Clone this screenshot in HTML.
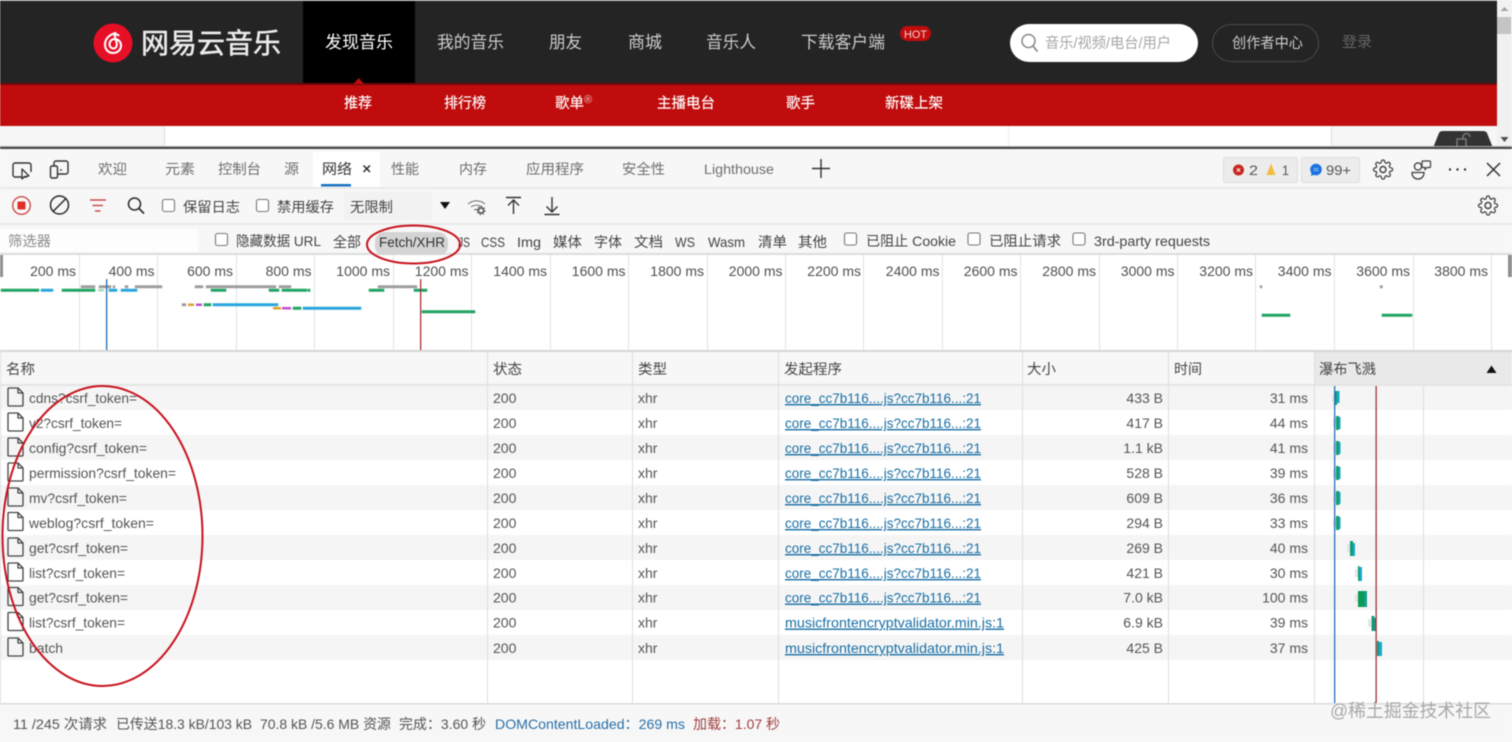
<!DOCTYPE html>
<html lang="zh"><head><meta charset="utf-8"><title>网易云音乐 DevTools</title>
<style>
html,body{margin:0;padding:0;background:#fff;width:1512px;height:742px;overflow:hidden}
svg{display:block;filter:blur(.4px)}
text{font-family:"Liberation Sans","Noto Sans CJK SC",sans-serif;font-size:14px;fill:#4a4a4a;white-space:pre}
.n{font-size:17px;fill:#ccc}
.s{font-size:14.5px;fill:#fff;stroke:#fff;stroke-width:.15}
.tb{fill:#6e6e6e}
.m{fill:#555}
.lk{fill:#1a6fa5;text-decoration:underline}
.r{text-anchor:end}
.ov{fill:#4f4f4f}
.h{fill:#444}
</style></head><body>
<svg width="1512" height="742" viewBox="0 0 1512 742" xmlns="http://www.w3.org/2000/svg">
<defs>
<g id="f"><path d="M9 388h9l5 5v12a1 1 0 0 1-1 1H9a1 1 0 0 1-1-1V389a1 1 0 0 1 1-1zM18 388v5h5" fill="none" stroke="#444" stroke-width="1.3" stroke-linejoin="round"/></g>
<g id="gear" fill="none" stroke="#3c3c3c" stroke-width="1.4"><path transform="translate(-10.4 -10.4) scale(.87)" d="M19.4 15a1.65 1.65 0 0 0 .33 1.82l.06.06a2 2 0 0 1 0 2.83 2 2 0 0 1-2.83 0l-.06-.06a1.65 1.65 0 0 0-1.82-.33 1.65 1.65 0 0 0-1 1.51V21a2 2 0 0 1-2 2 2 2 0 0 1-2-2v-.09A1.65 1.65 0 0 0 9 19.4a1.65 1.65 0 0 0-1.82.33l-.06.06a2 2 0 0 1-2.83 0 2 2 0 0 1 0-2.83l.06-.06a1.65 1.65 0 0 0 .33-1.82 1.65 1.65 0 0 0-1.51-1H3a2 2 0 0 1-2-2 2 2 0 0 1 2-2h.09A1.65 1.65 0 0 0 4.6 9a1.65 1.65 0 0 0-.33-1.82l-.06-.06a2 2 0 0 1 0-2.83 2 2 0 0 1 2.83 0l.06.06a1.65 1.65 0 0 0 1.82.33H9a1.65 1.65 0 0 0 1-1.51V3a2 2 0 0 1 2-2 2 2 0 0 1 2 2v.09a1.65 1.65 0 0 0 1 1.51 1.65 1.65 0 0 0 1.82-.33l.06-.06a2 2 0 0 1 2.83 0 2 2 0 0 1 0 2.83l-.06.06a1.65 1.65 0 0 0-.33 1.82V9a1.65 1.65 0 0 0 1.51 1H21a2 2 0 0 1 2 2 2 2 0 0 1-2 2h-.09a1.65 1.65 0 0 0-1.51 1z"/><circle r="3"/></g>
</defs>

<!-- page top -->
<rect width="1512" height="150" fill="#fff"/>
<rect width="1497" height="1.500" fill="#aaa"/>
<rect y="1" width="1497" height="83" fill="#242424"/>
<rect x="303" y="1" width="112" height="83" fill="#000"/>
<rect y="83" width="1497" height="2" fill="#6d0808"/>
<rect y="85" width="1497" height="41" fill="#c00c0c"/>
<path d="M353.500 84L358.700 78L364 84z" fill="#c20c0c"/>
<rect y="126" width="164" height="22" fill="#f6f6f6"/>
<rect x="164" y="126" width="1" height="22" fill="#ddd"/>
<rect x="1008" y="126" width="1" height="22" fill="#eee"/>
<rect x="1331" y="126" width="166" height="22" fill="#f6f6f6"/>
<rect x="1331" y="126" width="1" height="22" fill="#ddd"/>
<rect x="1497" y="0" width="15" height="148" fill="#f1f1f1"/>
<rect x="1497" y="17" width="14" height="17" fill="#c4c4c4"/>
<path d="M1500.500 11L1504.500 7L1508.500 11z" fill="#a3a3a3"/>
<path d="M1500.500 137L1504.500 142L1508.500 137z" fill="#505050"/>
<path d="M1433 148L1439 133Q1440 131 1443 131H1483Q1486 131 1487 133L1493 148z" fill="#333"/>
<path d="M1457 139h9v8h-9zM1463 139v-2a3.500 3.500 0 0 1 7 0" fill="none" stroke="#777" stroke-width="1.500"/>

<!-- logo -->
<circle cx="113" cy="43" r="19.500" fill="#e60f26"/>
<path d="M115.500 33C109 35 105 39 105 44.500C105 49.500 108.500 53 113 53C118 53 121 49.500 121 45.500C121 41.500 118 39 114.500 39C111.500 39 109.500 41.500 109.500 44.300C109.500 46.800 111.300 48.500 113.300 48.500C115.500 48.500 116.800 46.800 116.800 44.500C116.800 41.500 115.200 38.500 114.700 36C114.500 34.500 116.500 34 118.500 35.300" fill="none" stroke="#fff" stroke-width="2.100" stroke-linecap="round"/>
<text x="141" y="53" textLength="140" lengthAdjust="spacingAndGlyphs" style="font-size:28px;fill:#ececec;stroke:#ececec;stroke-width:.5">网易云音乐</text>

<!-- nav -->
<text class="n" x="325" y="48" textLength="68" lengthAdjust="spacingAndGlyphs" style="fill:#fff">发现音乐</text>
<text class="n" x="437" y="48" textLength="67" lengthAdjust="spacingAndGlyphs">我的音乐</text>
<text class="n" x="549" y="48" textLength="33" lengthAdjust="spacingAndGlyphs">朋友</text>
<text class="n" x="628" y="48" textLength="34" lengthAdjust="spacingAndGlyphs">商城</text>
<text class="n" x="706" y="48" textLength="50" lengthAdjust="spacingAndGlyphs">音乐人</text>
<text class="n" x="801" y="48" textLength="84" lengthAdjust="spacingAndGlyphs">下载客户端</text>
<rect x="900" y="26" width="31" height="15" rx="7.500" fill="#c20c0c"/>
<text x="904" y="38" textLength="23" lengthAdjust="spacingAndGlyphs" style="font-size:11px;fill:#f4d0d0">HOT</text>
<rect x="1010" y="24" width="188" height="38" rx="19" fill="#fff"/>
<circle cx="1028.500" cy="41" r="6.500" fill="none" stroke="#888" stroke-width="1.500"/>
<path d="M1033 46L1037 51" stroke="#888" stroke-width="1.800" stroke-linecap="round"/>
<text x="1045" y="48" textLength="126" lengthAdjust="spacingAndGlyphs" style="font-size:14.500px;fill:#a6a6a6">音乐/视频/电台/用户</text>
<rect x="1212.500" y="24.500" width="106" height="37" rx="18.500" fill="none" stroke="#4a4a4a"/>
<text x="1232" y="48" textLength="71" lengthAdjust="spacingAndGlyphs" style="font-size:14.500px;fill:#ccc">创作者中心</text>
<text x="1342" y="47" textLength="30" lengthAdjust="spacingAndGlyphs" style="font-size:14.500px;fill:#666">登录</text>

<!-- subnav -->
<text class="s" x="344" y="108" textLength="28" lengthAdjust="spacingAndGlyphs">推荐</text>
<text class="s" x="444" y="108" textLength="42" lengthAdjust="spacingAndGlyphs">排行榜</text>
<text class="s" x="555" y="108" textLength="29" lengthAdjust="spacingAndGlyphs">歌单</text>
<text x="584" y="103" style="font-size:11px;fill:#f3c5c5">®</text>
<text class="s" x="657" y="108" textLength="58" lengthAdjust="spacingAndGlyphs">主播电台</text>
<text class="s" x="786" y="108" textLength="29" lengthAdjust="spacingAndGlyphs">歌手</text>
<text class="s" x="885" y="108" textLength="58" lengthAdjust="spacingAndGlyphs">新碟上架</text>

<!-- devtools chrome -->
<rect y="146" width="1512" height="1" fill="#aaa"/>
<rect y="147" width="1512" height="2" fill="#444"/>
<rect y="149" width="1512" height="593" fill="#f7f7f7"/>
<rect y="187" width="1512" height="2" fill="#e9e9e9"/>
<rect y="223" width="1512" height="2" fill="#e9e9e9"/>
<rect y="253" width="1512" height="2" fill="#dcdcdc"/>

<!-- tab bar icons -->
<path d="M27 177H15a2 2 0 0 1-2-2V165a2 2 0 0 1 2-2H29a2 2 0 0 1 2 2V172" fill="none" stroke="#333" stroke-width="1.400"/>
<path d="M22 169L22 179L24.500 176.500L29 176z" fill="#fff" stroke="#333" stroke-width="1.300" stroke-linejoin="round"/>
<path d="M57 174H66a2 2 0 0 0 2-2V163a2 2 0 0 0-2-2H56a2 2 0 0 0-2 2V166" fill="none" stroke="#333" stroke-width="1.400"/>
<rect x="50.500" y="166" width="7" height="12" rx="1.500" fill="#f7f7f7" stroke="#333" stroke-width="1.400"/>
<path d="M60 170h2" stroke="#333" stroke-width="1.300"/>
<rect x="313" y="152" width="67" height="35" fill="#fff"/>
<rect x="321" y="184" width="30" height="2.500" fill="#1a73c4"/>
<text class="tb" x="98" y="174" textLength="29" lengthAdjust="spacingAndGlyphs">欢迎</text>
<text class="tb" x="165" y="174" textLength="30" lengthAdjust="spacingAndGlyphs">元素</text>
<text class="tb" x="218" y="174" textLength="43" lengthAdjust="spacingAndGlyphs">控制台</text>
<text class="tb" x="284" y="174" textLength="15" lengthAdjust="spacingAndGlyphs">源</text>
<text x="322" y="174" textLength="30" lengthAdjust="spacingAndGlyphs" style="fill:#333">网络</text>
<path d="M363.500 165.500L370 172M370 165.500L363.500 172" stroke="#222" stroke-width="1.400"/>
<text class="tb" x="391" y="174" textLength="28" lengthAdjust="spacingAndGlyphs">性能</text>
<text class="tb" x="459" y="174" textLength="28" lengthAdjust="spacingAndGlyphs">内存</text>
<text class="tb" x="526" y="174" textLength="58" lengthAdjust="spacingAndGlyphs">应用程序</text>
<text class="tb" x="622" y="174" textLength="43" lengthAdjust="spacingAndGlyphs">安全性</text>
<text class="tb" x="704" y="174" textLength="70" lengthAdjust="spacingAndGlyphs">Lighthouse</text>
<path d="M821 159V178M812 168.500H830" stroke="#333" stroke-width="1.400"/>

<!-- badges -->
<rect x="1223.500" y="157.500" width="74" height="25" rx="2" fill="#ececec" stroke="#dedede"/>
<rect x="1301.500" y="157.500" width="58" height="25" rx="2" fill="#ececec" stroke="#dedede"/>
<circle cx="1238.500" cy="170" r="5.500" fill="#c8261e"/>
<path d="M1236.800 168.300l3.400 3.400M1240.200 168.300l-3.400 3.400" stroke="#fff" stroke-width="1"/>
<text x="1249" y="175" textLength="9" lengthAdjust="spacingAndGlyphs" class="m">2</text>
<path d="M1271 163.500L1275.500 175H1266.500z" fill="#f3bb3f"/>
<text x="1282" y="175" textLength="7" lengthAdjust="spacingAndGlyphs" class="m">1</text>
<circle cx="1316" cy="169.500" r="5.800" fill="#1b73e0"/>
<path d="M1311.500 173L1311 176L1314.500 174.500z" fill="#1b73e0"/>
<path d="M1313.500 168.500h5M1313.500 170.500h5" stroke="#bcd7fa" stroke-width=".8"/>
<text x="1326" y="175" textLength="25" lengthAdjust="spacingAndGlyphs" class="m">99+</text>
<use href="#gear" x="1383" y="169.500"/>
<circle cx="1418" cy="166.500" r="3.600" fill="none" stroke="#3c3c3c" stroke-width="1.300"/>
<path d="M1412 172.500h12c0 4-2.500 6.500-6 6.500s-6-2.500-6-6.500z" fill="none" stroke="#3c3c3c" stroke-width="1.300" stroke-linejoin="round"/>
<path d="M1423 161h6.500a1 1 0 0 1 1 1v4.500a1 1 0 0 1-1 1h-2.500l-2 2v-2h-2a1 1 0 0 1-1-1v-4.500a1 1 0 0 1 1-1z" fill="none" stroke="#3c3c3c" stroke-width="1.200"/>
<circle cx="1450" cy="169.500" r="1.200" fill="#333"/><circle cx="1457.500" cy="169.500" r="1.200" fill="#333"/><circle cx="1465" cy="169.500" r="1.200" fill="#333"/>
<path d="M1487 163L1500 176M1500 163L1487 176" stroke="#333" stroke-width="1.500"/>

<!-- toolbar -->
<circle cx="21.500" cy="205.500" r="8.800" fill="none" stroke="#c9504d" stroke-width="1.400"/>
<rect x="17.500" y="201.500" width="8" height="8" rx="1" fill="#e0302a"/>
<circle cx="59.500" cy="205" r="9" fill="none" stroke="#2a2a2a" stroke-width="1.500"/>
<path d="M53 211.500L66 198.500" stroke="#2a2a2a" stroke-width="1.500"/>
<path d="M90 200H106M92.500 205.500H103M95 211H100.500" stroke="#c9504d" stroke-width="1.500"/>
<circle cx="134.500" cy="204" r="6" fill="none" stroke="#2a2a2a" stroke-width="1.500"/>
<path d="M139 208.500L144 213.500" stroke="#2a2a2a" stroke-width="1.700"/>
<rect x="162.500" y="199.500" width="12" height="12" rx="2" fill="#fff" stroke="#777" stroke-width="1.100"/>
<text class="h" x="183" y="212" textLength="57" lengthAdjust="spacingAndGlyphs">保留日志</text>
<rect x="256.500" y="199.500" width="12" height="12" rx="2" fill="#fff" stroke="#777" stroke-width="1.100"/>
<text class="h" x="277" y="212" textLength="57" lengthAdjust="spacingAndGlyphs">禁用缓存</text>
<rect x="344" y="192" width="88" height="28" fill="#f2f2f2"/>
<text class="h" x="350" y="212" textLength="43" lengthAdjust="spacingAndGlyphs">无限制</text>
<path d="M440 202H450L445 209z" fill="#111"/>
<path d="M468 204a13 13 0 0 1 17 0M471 207a9 9 0 0 1 11 0M474 210a5 5 0 0 1 5 0" fill="none" stroke="#777" stroke-width="1.100"/>
<circle cx="481" cy="210.500" r="2.600" fill="#f7f7f7" stroke="#555" stroke-width="1.600"/>
<circle cx="481" cy="210.500" r="4" fill="none" stroke="#555" stroke-width="1.200" stroke-dasharray="1.500 1.600"/>
<path d="M506 197.500H521M513.500 214V200M508 205.500L513.500 200L519 205.500" fill="none" stroke="#333" stroke-width="1.400"/>
<path d="M552 197V212M546.500 206.500L552 212L557.500 206.500M544.500 214.500H559.500" fill="none" stroke="#333" stroke-width="1.400"/>
<use href="#gear" x="1488" y="205.500"/>

<!-- filter row -->
<rect x="0" y="229" width="198" height="23" fill="#fdfdfd"/>
<text x="8" y="246" textLength="43" lengthAdjust="spacingAndGlyphs" style="fill:#8a8a8a">筛选器</text>
<rect x="215.500" y="233.500" width="12" height="12" rx="2" fill="#fff" stroke="#777" stroke-width="1.100"/>
<text class="h" x="236" y="246" textLength="85" lengthAdjust="spacingAndGlyphs">隐藏数据 URL</text>
<text class="h" x="333" y="247" textLength="28" lengthAdjust="spacingAndGlyphs">全部</text>
<rect x="375" y="232" width="73" height="24" rx="10" fill="#d4d4d4"/>
<text x="379" y="247" textLength="66" lengthAdjust="spacingAndGlyphs" style="fill:#333">Fetch/XHR</text>
<text class="h" x="458" y="247" textLength="12" lengthAdjust="spacingAndGlyphs">JS</text>
<text class="h" x="481" y="247" textLength="24" lengthAdjust="spacingAndGlyphs">CSS</text>
<text class="h" x="517" y="247" textLength="24" lengthAdjust="spacingAndGlyphs">Img</text>
<text class="h" x="553" y="247" textLength="29" lengthAdjust="spacingAndGlyphs">媒体</text>
<text class="h" x="594" y="247" textLength="28" lengthAdjust="spacingAndGlyphs">字体</text>
<text class="h" x="634" y="247" textLength="29" lengthAdjust="spacingAndGlyphs">文档</text>
<text class="h" x="675" y="247" textLength="20" lengthAdjust="spacingAndGlyphs">WS</text>
<text class="h" x="708" y="247" textLength="37" lengthAdjust="spacingAndGlyphs">Wasm</text>
<text class="h" x="758" y="247" textLength="29" lengthAdjust="spacingAndGlyphs">清单</text>
<text class="h" x="798" y="247" textLength="29" lengthAdjust="spacingAndGlyphs">其他</text>
<rect x="844.500" y="233" width="12" height="12" rx="2" fill="#fff" stroke="#777" stroke-width="1.100"/>
<text class="h" x="866" y="246" textLength="90" lengthAdjust="spacingAndGlyphs">已阻止 Cookie</text>
<rect x="968" y="233" width="12" height="12" rx="2" fill="#fff" stroke="#777" stroke-width="1.100"/>
<text class="h" x="989" y="246" textLength="72" lengthAdjust="spacingAndGlyphs">已阻止请求</text>
<rect x="1073" y="233" width="12" height="12" rx="2" fill="#fff" stroke="#777" stroke-width="1.100"/>
<text class="h" x="1094" y="246" textLength="116" lengthAdjust="spacingAndGlyphs">3rd-party requests</text>

<!-- overview -->
<rect y="255" width="1512" height="96" fill="#fff"/>
<g fill="#e2e2e2">
<rect x="79" y="255" width="1" height="96"/><rect x="157" y="255" width="1" height="96"/><rect x="236" y="255" width="1" height="96"/><rect x="314" y="255" width="1" height="96"/><rect x="393" y="255" width="1" height="96"/><rect x="471" y="255" width="1" height="96"/><rect x="550" y="255" width="1" height="96"/><rect x="628" y="255" width="1" height="96"/><rect x="707" y="255" width="1" height="96"/><rect x="785" y="255" width="1" height="96"/><rect x="863" y="255" width="1" height="96"/><rect x="942" y="255" width="1" height="96"/><rect x="1020" y="255" width="1" height="96"/><rect x="1099" y="255" width="1" height="96"/><rect x="1177" y="255" width="1" height="96"/><rect x="1255" y="255" width="1" height="96"/><rect x="1334" y="255" width="1" height="96"/><rect x="1413" y="255" width="1" height="96"/><rect x="1491" y="255" width="1" height="96"/>
</g>
<rect x="0" y="255" width="3" height="22" fill="#8f8f8f"/>
<rect x="1508" y="255" width="4" height="22" fill="#8f8f8f"/>
<g>
<text class="ov" x="76" y="276" text-anchor="end">200 ms</text>
<text class="ov" x="154.500" y="276" text-anchor="end">400 ms</text>
<text class="ov" x="233" y="276" text-anchor="end">600 ms</text>
<text class="ov" x="311.500" y="276" text-anchor="end">800 ms</text>
<text class="ov" x="390" y="276" text-anchor="end">1000 ms</text>
<text class="ov" x="468.500" y="276" text-anchor="end">1200 ms</text>
<text class="ov" x="547" y="276" text-anchor="end">1400 ms</text>
<text class="ov" x="625.500" y="276" text-anchor="end">1600 ms</text>
<text class="ov" x="704" y="276" text-anchor="end">1800 ms</text>
<text class="ov" x="782.500" y="276" text-anchor="end">2000 ms</text>
<text class="ov" x="861" y="276" text-anchor="end">2200 ms</text>
<text class="ov" x="939.500" y="276" text-anchor="end">2400 ms</text>
<text class="ov" x="1017.500" y="276" text-anchor="end">2600 ms</text>
<text class="ov" x="1096" y="276" text-anchor="end">2800 ms</text>
<text class="ov" x="1174.500" y="276" text-anchor="end">3000 ms</text>
<text class="ov" x="1253" y="276" text-anchor="end">3200 ms</text>
<text class="ov" x="1331.500" y="276" text-anchor="end">3400 ms</text>
<text class="ov" x="1410" y="276" text-anchor="end">3600 ms</text>
<text class="ov" x="1488" y="276" text-anchor="end">3800 ms</text>
</g>
<g fill="#1fa463" stroke="#1fa463" stroke-width=".5">
<rect x="1" y="289" width="38" height="2.500"/><rect x="62" y="289" width="33" height="2.500"/><rect x="211" y="289" width="15" height="2.500"/><rect x="269" y="289" width="10" height="2.500"/><rect x="282" y="289" width="25" height="2.500"/><rect x="308" y="289" width="2" height="2.500"/><rect x="369" y="289" width="15" height="2.500"/><rect x="414" y="289" width="13" height="2.500"/>
<rect x="204" y="303.500" width="7" height="2.500"/><rect x="293" y="307" width="8" height="2.500"/><rect x="422" y="310.500" width="53" height="2.500"/><rect x="1262" y="314" width="28" height="2.500"/><rect x="1382" y="314" width="30" height="2.500"/>
</g>
<rect x="98" y="289" width="6" height="2.500" fill="#a8dcc0"/>
<g fill="#2aa6dc" stroke="#2aa6dc" stroke-width=".5">
<rect x="41" y="289" width="12" height="2.500"/><rect x="109" y="289" width="8" height="2.500"/><rect x="121" y="289" width="16" height="2.500"/><rect x="213" y="303.500" width="65" height="2.500"/><rect x="303" y="307" width="58" height="2.500"/>
</g>
<g fill="#9c9c9c" stroke="#9c9c9c" stroke-width=".4">
<rect x="81" y="285.500" width="14" height="2.500"/><rect x="99" y="285.500" width="12" height="2.500"/><rect x="113" y="285.500" width="2" height="2.500"/><rect x="125" y="285.500" width="3" height="2.500"/><rect x="135" y="285.500" width="27" height="2.500"/><rect x="195" y="285.500" width="8" height="2.500"/><rect x="206" y="285.500" width="70" height="2.500"/><rect x="279" y="285.500" width="12" height="2.500"/><rect x="378" y="285.500" width="39" height="2.500"/><rect x="182" y="303.500" width="4" height="2.500"/><rect x="1260" y="285.500" width="2" height="2.500"/><rect x="1380" y="285.500" width="2.500" height="2.500"/>
</g>
<rect x="188" y="303.500" width="6" height="2.500" fill="#e0a030"/><rect x="273" y="307" width="8" height="2.500" fill="#e0a030"/>
<rect x="196" y="303.500" width="6" height="2.500" fill="#c050d0"/><rect x="282" y="307" width="9" height="2.500" fill="#c050d0"/>
<rect x="106" y="279" width="1.300" height="72" fill="#1a6fb5"/>
<rect x="420" y="279" width="1.300" height="72" fill="#a8323a"/>
<rect y="350" width="1512" height="2" fill="#d6d6d6"/>

<!-- table -->
<rect y="352" width="1512" height="351" fill="#fff"/>
<rect y="352" width="1512" height="32" fill="#f7f7f7"/>
<rect x="1314" y="352" width="198" height="32" fill="#e9e9e9"/>
<rect y="384" width="1512" height="2" fill="#e4e4e4"/>
<g fill="#f5f5f5">
<rect y="386" width="1512" height="24"/><rect y="435" width="1512" height="25"/><rect y="485" width="1512" height="25"/><rect y="535" width="1512" height="25"/><rect y="585" width="1512" height="25"/><rect y="635" width="1512" height="25"/>
</g>
<g fill="#dedede">
<rect x="487" y="352" width="1" height="351"/><rect x="632" y="352" width="1" height="351"/><rect x="778" y="352" width="1" height="351"/><rect x="1022" y="352" width="1" height="351"/><rect x="1168" y="352" width="1" height="351"/><rect x="1314" y="352" width="1" height="351"/><rect x="1423" y="386" width="1" height="317"/><rect x="0" y="352" width="1" height="351"/>
</g>
<text class="h" x="6" y="374" textLength="29" lengthAdjust="spacingAndGlyphs">名称</text>
<text class="h" x="493" y="374" textLength="29" lengthAdjust="spacingAndGlyphs">状态</text>
<text class="h" x="638" y="374" textLength="29" lengthAdjust="spacingAndGlyphs">类型</text>
<text class="h" x="784" y="374" textLength="58" lengthAdjust="spacingAndGlyphs">发起程序</text>
<text class="h" x="1027" y="374" textLength="29" lengthAdjust="spacingAndGlyphs">大小</text>
<text class="h" x="1174" y="374" textLength="28" lengthAdjust="spacingAndGlyphs">时间</text>
<text class="h" x="1319" y="374" textLength="57" lengthAdjust="spacingAndGlyphs">瀑布飞溅</text>
<path d="M1486.500 373L1491.500 365.500L1496.500 373z" fill="#111"/>

<use href="#f" y="0"/><use href="#f" y="25"/><use href="#f" y="50"/><use href="#f" y="75"/><use href="#f" y="100"/><use href="#f" y="124.500"/><use href="#f" y="150"/><use href="#f" y="175"/><use href="#f" y="199.500"/><use href="#f" y="224.500"/><use href="#f" y="250"/>

<text class="m" x="29" y="403" textLength="108" lengthAdjust="spacingAndGlyphs">cdns?csrf_token=</text>
<text class="m" x="29" y="428" textLength="93" lengthAdjust="spacingAndGlyphs">v2?csrf_token=</text>
<text class="m" x="29" y="453" textLength="118" lengthAdjust="spacingAndGlyphs">config?csrf_token=</text>
<text class="m" x="29" y="478" textLength="147" lengthAdjust="spacingAndGlyphs">permission?csrf_token=</text>
<text class="m" x="29" y="503" textLength="98" lengthAdjust="spacingAndGlyphs">mv?csrf_token=</text>
<text class="m" x="29" y="528" textLength="125" lengthAdjust="spacingAndGlyphs">weblog?csrf_token=</text>
<text class="m" x="29" y="553" textLength="99" lengthAdjust="spacingAndGlyphs">get?csrf_token=</text>
<text class="m" x="29" y="578" textLength="96" lengthAdjust="spacingAndGlyphs">list?csrf_token=</text>
<text class="m" x="29" y="602.500" textLength="99" lengthAdjust="spacingAndGlyphs">get?csrf_token=</text>
<text class="m" x="29" y="627.500" textLength="96" lengthAdjust="spacingAndGlyphs">list?csrf_token=</text>
<text class="m" x="29" y="653" textLength="34" lengthAdjust="spacingAndGlyphs">batch</text>

<text class="m" x="493" y="403">200</text><text class="m" x="493" y="428">200</text><text class="m" x="493" y="453">200</text><text class="m" x="493" y="478">200</text><text class="m" x="493" y="503">200</text><text class="m" x="493" y="528">200</text><text class="m" x="493" y="553">200</text><text class="m" x="493" y="578">200</text><text class="m" x="493" y="602.500">200</text><text class="m" x="493" y="627.500">200</text><text class="m" x="493" y="653">200</text>

<text class="m" x="638" y="403">xhr</text><text class="m" x="638" y="428">xhr</text><text class="m" x="638" y="453">xhr</text><text class="m" x="638" y="478">xhr</text><text class="m" x="638" y="503">xhr</text><text class="m" x="638" y="528">xhr</text><text class="m" x="638" y="553">xhr</text><text class="m" x="638" y="578">xhr</text><text class="m" x="638" y="602.500">xhr</text><text class="m" x="638" y="627.500">xhr</text><text class="m" x="638" y="653">xhr</text>

<text class="lk" x="785" y="403" textLength="196" lengthAdjust="spacingAndGlyphs">core_cc7b116....js?cc7b116...:21</text>
<text class="lk" x="785" y="428" textLength="196" lengthAdjust="spacingAndGlyphs">core_cc7b116....js?cc7b116...:21</text>
<text class="lk" x="785" y="453" textLength="196" lengthAdjust="spacingAndGlyphs">core_cc7b116....js?cc7b116...:21</text>
<text class="lk" x="785" y="478" textLength="196" lengthAdjust="spacingAndGlyphs">core_cc7b116....js?cc7b116...:21</text>
<text class="lk" x="785" y="503" textLength="196" lengthAdjust="spacingAndGlyphs">core_cc7b116....js?cc7b116...:21</text>
<text class="lk" x="785" y="528" textLength="196" lengthAdjust="spacingAndGlyphs">core_cc7b116....js?cc7b116...:21</text>
<text class="lk" x="785" y="553" textLength="196" lengthAdjust="spacingAndGlyphs">core_cc7b116....js?cc7b116...:21</text>
<text class="lk" x="785" y="578" textLength="196" lengthAdjust="spacingAndGlyphs">core_cc7b116....js?cc7b116...:21</text>
<text class="lk" x="785" y="602.500" textLength="196" lengthAdjust="spacingAndGlyphs">core_cc7b116....js?cc7b116...:21</text>
<text class="lk" x="785" y="627.500" textLength="219" lengthAdjust="spacingAndGlyphs">musicfrontencryptvalidator.min.js:1</text>
<text class="lk" x="785" y="653" textLength="219" lengthAdjust="spacingAndGlyphs">musicfrontencryptvalidator.min.js:1</text>

<text class="m r" x="1163" y="403">433 B</text><text class="m r" x="1163" y="428">417 B</text><text class="m r" x="1163" y="453">1.1 kB</text><text class="m r" x="1163" y="478">528 B</text><text class="m r" x="1163" y="503">609 B</text><text class="m r" x="1163" y="528">294 B</text><text class="m r" x="1163" y="553">269 B</text><text class="m r" x="1163" y="578">421 B</text><text class="m r" x="1163" y="602.500">7.0 kB</text><text class="m r" x="1163" y="627.500">6.9 kB</text><text class="m r" x="1163" y="653">425 B</text>

<text class="m r" x="1308" y="403">31 ms</text><text class="m r" x="1308" y="428">44 ms</text><text class="m r" x="1308" y="453">41 ms</text><text class="m r" x="1308" y="478">39 ms</text><text class="m r" x="1308" y="503">36 ms</text><text class="m r" x="1308" y="528">33 ms</text><text class="m r" x="1308" y="553">40 ms</text><text class="m r" x="1308" y="578">30 ms</text><text class="m r" x="1308" y="602.500">100 ms</text><text class="m r" x="1308" y="627.500">39 ms</text><text class="m r" x="1308" y="653">37 ms</text>

<!-- waterfall -->
<g fill="#dfe8e6">
<rect x="1332" y="394" width="2" height="8"/><rect x="1333" y="419" width="3" height="8"/><rect x="1333" y="444" width="3" height="8"/><rect x="1333" y="469" width="3" height="8"/><rect x="1333" y="494" width="3" height="8"/><rect x="1333" y="519" width="3" height="8"/><rect x="1347" y="544" width="3" height="8"/><rect x="1355" y="569" width="3" height="8"/><rect x="1355" y="594" width="3" height="8"/><rect x="1368" y="619" width="3" height="8"/>
</g>
<g fill="#0f9d75">
<rect x="1334" y="391" width="3" height="14"/><rect x="1336" y="416" width="3" height="14"/><rect x="1336" y="441" width="3" height="14"/><rect x="1336" y="466" width="3" height="14"/><rect x="1336" y="491" width="3" height="14"/><rect x="1336" y="516" width="3" height="14"/><rect x="1350" y="541" width="3" height="15"/><rect x="1358" y="566" width="1.500" height="15"/><rect x="1358" y="591" width="6" height="16" fill="#0b9a56"/><rect x="1371.500" y="616" width="3" height="15"/><rect x="1377" y="641" width="2" height="15"/>
</g>
<g fill="#1ba8cf">
<rect x="1337" y="391" width="2.500" height="12"/><rect x="1339" y="417" width="1.500" height="12"/><rect x="1339" y="442" width="1.500" height="12"/><rect x="1339" y="467" width="1.500" height="12"/><rect x="1339" y="492" width="1.500" height="12"/><rect x="1339" y="517" width="1.500" height="12"/><rect x="1353" y="543" width="2" height="13"/><rect x="1359.500" y="567" width="2.500" height="14"/><rect x="1364" y="591" width="3" height="16" fill="#0f9e8c"/><rect x="1374.500" y="618" width="1.500" height="13" fill="#4c7a84"/><rect x="1379" y="642" width="3" height="14"/>
</g>
<rect x="1334" y="386" width="1.300" height="317" fill="#2a6fb8"/>
<rect x="1375.500" y="386" width="1.300" height="317" fill="#a8323a"/>

<!-- status bar -->
<rect y="703" width="1512" height="39" fill="#f7f7f7"/>
<rect y="703" width="1512" height="1.500" fill="#dcdcdc"/>
<text class="m" x="13" y="729" textLength="94" lengthAdjust="spacingAndGlyphs">11 /245 次请求</text>
<text class="m" x="116" y="729" textLength="136" lengthAdjust="spacingAndGlyphs">已传送18.3 kB/103 kB</text>
<text class="m" x="260" y="729" textLength="131" lengthAdjust="spacingAndGlyphs">70.8 kB /5.6 MB 资源</text>
<text class="m" x="399" y="729" textLength="87" lengthAdjust="spacingAndGlyphs">完成：3.60 秒</text>
<text x="495" y="729" textLength="190" lengthAdjust="spacingAndGlyphs" style="fill:#2a6fa8">DOMContentLoaded：269 ms</text>
<text x="693" y="729" textLength="87" lengthAdjust="spacingAndGlyphs" style="fill:#a04040">加载：1.07 秒</text>
<text x="1330" y="717" textLength="161" lengthAdjust="spacingAndGlyphs" style="font-size:18px;fill:#a8a8a8">@稀土掘金技术社区</text>

<!-- annotation ellipses -->
<ellipse cx="413.500" cy="244.500" rx="46.500" ry="19" fill="none" stroke="#c8131f" stroke-width="2"/>
<ellipse cx="102.500" cy="536" rx="100" ry="150" fill="none" stroke="#c8131f" stroke-width="2"/>
</svg>
</body></html>
